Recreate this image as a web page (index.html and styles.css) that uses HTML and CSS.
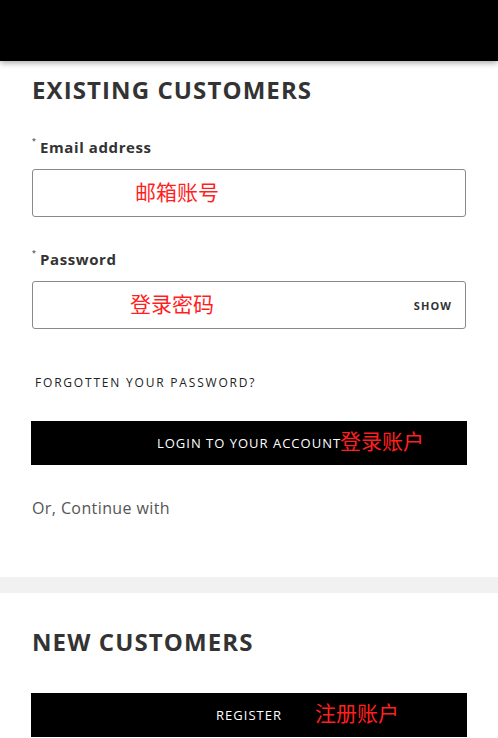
FILE: index.html
```html
<!DOCTYPE html>
<html lang="en">
<head>
<meta charset="utf-8">
<title>Sign in</title>
<link rel="stylesheet" href="styles.css">
</head>
<body>
<header class="topbar"></header>
<main>
  <section class="panel panel-login">
    <h1 class="title">EXISTING CUSTOMERS</h1>
    <div class="label first"><span class="req">*</span>Email address</div>
    <div class="field"><span class="note note-email">邮箱账号</span></div>
    <div class="label"><span class="req">*</span>Password</div>
    <div class="field field-pass"><span class="note note-pass">登录密码</span><span class="show">SHOW</span></div>
    <a class="forgot" href="#">FORGOTTEN YOUR PASSWORD?</a>
    <div class="btn btn-login"><span class="btn-text">LOGIN TO YOUR ACCOUNT<span class="note btn-note btn-note-login">登录账户</span></span></div>
    <p class="or">Or, Continue with</p>
  </section>
  <div class="band"></div>
  <section class="panel panel-new">
    <h2 class="title">NEW CUSTOMERS</h2>
    <div class="btn btn-register"><span class="btn-text">REGISTER<span class="note btn-note btn-note-reg">注册账户</span></span></div>
  </section>
</main>
</body>
</html>
```
FILE: styles.css
```css
* { box-sizing: border-box; }
html, body { margin: 0; padding: 0; background: #fff; }
body {
  font-family: "Open Sans", "Noto Sans CJK SC", sans-serif;
  color: #333;
  overflow: hidden;
}
.topbar {
  height: 61px;
  background: #000;
  box-shadow: 0 2px 6px rgba(0,0,0,0.35);
  position: relative;
  z-index: 2;
}
.panel { padding: 0 32px; }
.panel-login { padding-bottom: 58px; }
.title {
  margin: 14px 0 0;
  font-size: 24px;
  line-height: 30px;
  font-weight: 700;
  color: #333;
  letter-spacing: 1.1px;
}
.panel-new .title { margin-top: 34px; }
.label {
  margin: 32px 0 12px;
  font-size: 15px;
  line-height: 20px;
  font-weight: 700;
  color: #333;
  letter-spacing: 0.6px;
  display: flex;
}
.req {
  font-size: 7px;
  line-height: 7px;
  width: 8px;
  color: #666;
  letter-spacing: 0;
}
.field {
  height: 48px;
  border: 1px solid #8a8a8a;
  border-radius: 3px;
  display: flex;
  align-items: center;
}
.note {
  font-family: "Noto Sans CJK SC", sans-serif;
  color: #ff1f1f;
  font-size: 21px;
  font-weight: 400;
  letter-spacing: 0;
}
.field .note { margin-bottom: 4px; }
.note-email { margin-left: 102px; }
.note-pass { margin-left: 97px; }
.show {
  margin-left: auto;
  margin-right: 13px;
  font-size: 11px;
  font-weight: 700;
  color: #333;
  letter-spacing: 1.1px;
}
.forgot {
  display: block;
  margin: 46px 0 0 3px;
  font-size: 12px;
  line-height: 16px;
  color: #222;
  text-decoration: none;
  letter-spacing: 1.8px;
}
.btn {
  margin: 0 -1px;
  height: 44px;
  background: #000;
  display: flex;
  justify-content: center;
  align-items: center;
}
.btn-login { margin-top: 30px; }
.btn-register { margin-top: 36px; }
.btn-text {
  position: relative;
  color: #fff;
  font-size: 13px;
  line-height: 16px;
  letter-spacing: 1px;
}
.btn-note {
  position: absolute;
  left: 100%;
  top: 50%;
  transform: translateY(-62%);
  white-space: nowrap;
  line-height: 24px;
}
.btn-note-login { margin-left: -1px; }
.btn-note-reg { margin-left: 33px; }
.or {
  margin: 32px 0 0;
  font-size: 16px;
  line-height: 22px;
  color: #555;
  letter-spacing: 0.4px;
}
.band { height: 16px; background: #f1f1f1; }
```
